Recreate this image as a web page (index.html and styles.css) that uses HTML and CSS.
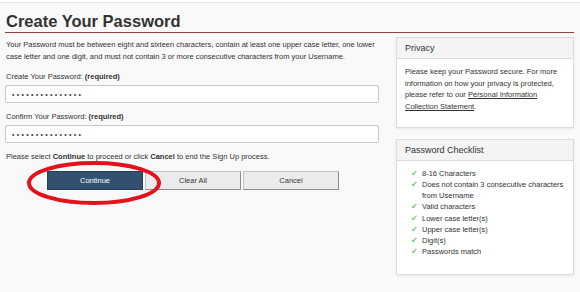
FILE: index.html
```html
<!DOCTYPE html>
<html lang="en">
  <head>
    <meta charset="UTF-8" />
    <title>Create Your Password</title>
    <link rel="stylesheet" href="styles.css">
  </head>
  <body>
    <div class="topbar"></div>
    <div class="wrap">
      <h1 class="title">Create Your Password</h1>
      <div class="main">
        <div class="left">
          <p class="intro">
            Your Password must be between eight and sixteen characters, contain at least one upper case letter, one lower
            case letter and one digit, and must not contain 3 or more consecutive characters from your Username.
          </p>
          <div class="field">
            <label for="pw">Create Your Password: <b>(required)</b></label>
            <input type="password" id="pw" value="abcdefghijklmno" readonly />
          </div>
          <div class="field">
            <label for="pw2">Confirm Your Password: <b>(required)</b></label>
            <input type="password" id="pw2" value="abcdefghijklmno" readonly />
          </div>
          <p class="note">Please select <b>Continue</b> to proceed or click <b>Cancel</b> to end the Sign Up process.</p>
          <div class="buttons">
            <div class="btn-wrap">
              <button class="btn primary">Continue</button>
              <svg class="circle" width="140" height="48" viewBox="0 0 140 48">
                <ellipse cx="70" cy="24" rx="65" ry="20" fill="none" stroke="#e3121c" stroke-width="4" />
              </svg>
            </div>
            <button class="btn">Clear All</button>
            <button class="btn">Cancel</button>
          </div>
        </div>
        <div class="right">
          <div class="panel">
            <div class="panel-head">Privacy</div>
            <div class="panel-body privacy">
              Please keep your Password secure. For more information on how your privacy is protected,
              please refer to our <a href="#">Personal Information</a><br>
              <a href="#">Collection Statement</a>.
            </div>
          </div>
          <div class="panel">
            <div class="panel-head">Password Checklist</div>
            <ul class="panel-body checklist">
              <li>8-16 Characters</li>
              <li>Does not contain 3 consecutive characters from Username</li>
              <li>Valid characters</li>
              <li>Lower case letter(s)</li>
              <li>Upper case letter(s)</li>
              <li>Digit(s)</li>
              <li>Passwords match</li>
            </ul>
          </div>
        </div>
      </div>
    </div>
  </body>
</html>
```

FILE: styles.css
```css
body {
  margin: 0;
  background: #f9f9f9;
  font-family: "Liberation Sans", Arial, sans-serif;
  color: #333;
  font-size: 7.5px;
}
.topbar {
  height: 2px;
  background: #fff;
  border-bottom: 1px solid #e4e4e4;
}
.wrap {
  padding: 0 6px 0 5px;
}
.title {
  margin: 0;
  padding: 8px 0 1px 1px;
  font-size: 16.5px;
  line-height: 20px;
  font-weight: bold;
  color: #333;
  border-bottom: 1.5px solid #8e4444;
}
.main {
  display: grid;
  grid-template-columns: 374px 178px;
  column-gap: 17px;
}
.intro {
  margin: 6px 0 0 1px;
  line-height: 12px;
}
.field {
  margin-top: 9px;
}
.field label {
  display: block;
  margin: 0 0 3px 1px;
  line-height: 10px;
}
.field input {
  display: block;
  box-sizing: border-box;
  width: 100%;
  height: 18px;
  padding: 0 6px;
  border: 1px solid #ccc;
  border-radius: 2px;
  background: #fff;
  font-family: "Liberation Sans", Arial, sans-serif;
  font-size: 7px;
  letter-spacing: 2.3px;
  color: #444;
  outline: none;
}
.note {
  margin: 9px 0 0 1px;
  line-height: 10px;
}
.buttons {
  display: flex;
  gap: 2px;
  margin: 9px 0 0 42px;
}
.btn-wrap {
  position: relative;
  display: flex;
}
.btn {
  width: 96px;
  height: 19px;
  padding: 0;
  border: 1px solid #c4c4c4;
  border-right-color: #8c8c8c;
  border-bottom-color: #8c8c8c;
  background: #ebebeb;
  font-family: "Liberation Sans", Arial, sans-serif;
  font-size: 7.5px;
  color: #333;
}
.btn.primary {
  background: #32506f;
  border-color: #27405a;
  color: #fff;
}
.circle {
  position: absolute;
  left: -23px;
  top: -12px;
}
.right {
  padding-top: 4px;
}
.panel {
  background: #fff;
  border: 1px solid #dcdcdc;
  box-shadow: 0 1px 2px rgba(0, 0, 0, 0.08);
  margin-bottom: 11px;
}
.panel-head {
  background: #f4f4f4;
  border-bottom: 1px solid #dcdcdc;
  height: 20px;
  line-height: 20px;
  padding-left: 8px;
  font-size: 9px;
  color: #333;
}
.panel-body {
  padding: 7px 8px 14px;
  line-height: 11.7px;
}
.privacy a {
  color: #333;
  text-decoration: underline;
}
.checklist {
  margin: 0;
  list-style: none;
  padding: 7px 8px 17px 25px;
  line-height: 11.2px;
}
.checklist li {
  position: relative;
}
.checklist li::before {
  content: "\2714";
  position: absolute;
  left: -11px;
  top: 0;
  color: #7cc46a;
  font-size: 8px;
  font-family: "DejaVu Sans", sans-serif;
}
```
